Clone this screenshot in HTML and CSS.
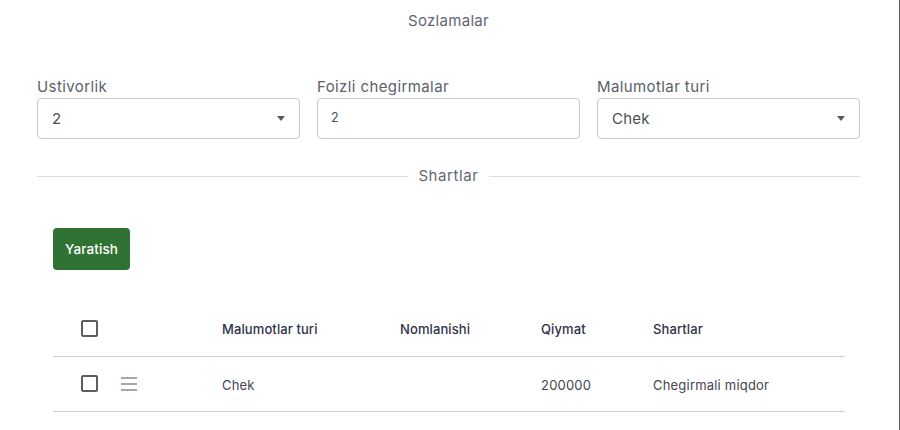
FILE: index.html
```html
<!DOCTYPE html>
<html lang="uz">
<head>
<meta charset="utf-8">
<title>Sozlamalar</title>
<link rel="stylesheet" href="styles.css">
</head>
<body>
<div class="page">
  <div class="title">Sozlamalar</div>
  <div class="fields">
    <div class="field">
      <div class="label">Ustivorlik</div>
      <div class="control select"><span class="value">2</span><span class="caret"></span></div>
    </div>
    <div class="field">
      <div class="label">Foizli chegirmalar</div>
      <div class="control input"><span class="value small">2</span></div>
    </div>
    <div class="field">
      <div class="label">Malumotlar turi</div>
      <div class="control select"><span class="value">Chek</span><span class="caret"></span></div>
    </div>
  </div>
  <div class="divider"><span class="line"></span><span class="divider-text">Shartlar</span><span class="line"></span></div>
  <div class="section">
    <button class="btn">Yaratish</button>
    <table class="grid">
      <colgroup>
        <col class="c1"><col class="c2"><col class="c3"><col class="c4"><col>
      </colgroup>
      <thead>
        <tr>
          <th><div class="lead"><span class="checkbox"></span></div></th>
          <th>Malumotlar turi</th>
          <th>Nomlanishi</th>
          <th>Qiymat</th>
          <th>Shartlar</th>
        </tr>
      </thead>
      <tbody>
        <tr>
          <td><div class="lead"><span class="checkbox"></span><span class="drag"><i></i><i></i><i></i></span></div></td>
          <td>Chek</td>
          <td></td>
          <td>200000</td>
          <td>Chegirmali miqdor</td>
        </tr>
      </tbody>
    </table>
  </div>
</div>
</body>
</html>
```
FILE: styles.css
```css
* { box-sizing: border-box; }
html, body { margin: 0; padding: 0; background: #fff; }
body { font-family: Inter, Roboto, "Liberation Sans", sans-serif; }
.page {
  width: 900px;
  min-height: 430px;
  padding: 11px 39px 0 37px;
  border-right: 1px solid #5c5c5c;
}
.title {
  text-align: center;
  font-size: 15px;
  letter-spacing: 0.3px;
  line-height: 20px;
  color: #5f6570;
}
.fields {
  margin-top: 46px;
  display: grid;
  grid-template-columns: repeat(3, 1fr);
  gap: 17px;
}
.label {
  font-size: 15px;
  letter-spacing: 0.4px;
  line-height: 20px;
  color: #5a6069;
  margin-bottom: 1px;
}
.control {
  height: 41px;
  border: 1px solid #c6c8cc;
  border-radius: 4px;
  display: flex;
  align-items: center;
  justify-content: space-between;
  padding: 0 14px 0 14px;
}
.value { font-size: 15px; letter-spacing: 0.2px; color: #4a4f57; }
.value.small { font-size: 12.5px; margin-top: -3px; }
.input { padding-left: 13px; }
.caret {
  width: 0; height: 0;
  border-left: 4.5px solid transparent;
  border-right: 4.5px solid transparent;
  border-top: 5px solid #555a60;
}
.divider {
  margin-top: 27px;
  height: 20px;
  display: flex;
  align-items: center;
}
.divider .line { flex: 1; height: 1px; background: #dcdee2; }
.divider-text {
  padding: 0 10px;
  font-size: 15px;
  letter-spacing: 0.6px;
  color: #626872;
  line-height: 20px;
}
.section { padding: 42px 15px 0 16px; }
.btn {
  display: block;
  height: 42px;
  padding: 0 12px;
  border: none;
  border-radius: 4px;
  background: #2f7234;
  color: #fff;
  font-family: inherit;
  font-size: 13.5px;
  letter-spacing: 0.1px;
  font-weight: 500;
}
.grid {
  margin-top: 31px;
  width: 100%;
  border-collapse: collapse;
  table-layout: fixed;
}
.c1 { width: 169px; }
.c2 { width: 178px; }
.c3 { width: 141px; }
.c4 { width: 112px; }
.grid th, .grid td {
  height: 55px;
  padding: 2px 0 0 0;
  text-align: left;
  font-size: 13px;
  border-bottom: 1px solid #cfd0d4;
  vertical-align: middle;
}
.grid th { font-weight: 500; color: #2e3248; letter-spacing: 0.1px; }
.grid td { color: #42464e; letter-spacing: 0.2px; }
.lead { display: flex; align-items: center; padding-left: 28px; margin-top: -2px; }
.checkbox {
  width: 17px; height: 17px;
  border: 2px solid #5e5e5e;
  border-radius: 2px;
}
.drag {
  margin-left: 23px;
  width: 16px;
  display: flex;
  flex-direction: column;
  gap: 4px;
}
.drag i { display: block; height: 2px; background: #a3a6b3; }
```
